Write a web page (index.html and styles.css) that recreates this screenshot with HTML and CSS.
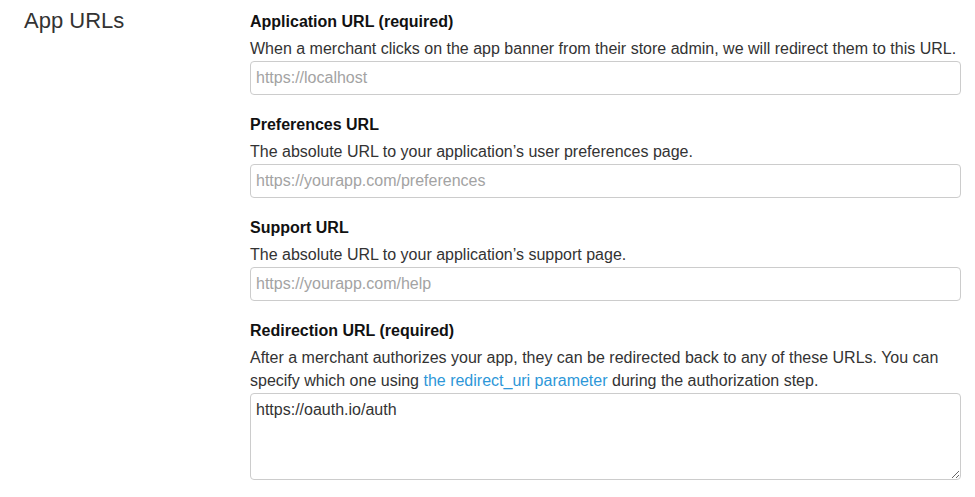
FILE: index.html
```html
<!DOCTYPE html>
<html lang="en">
<head>
<meta charset="utf-8">
<title>App URLs</title>
<link rel="stylesheet" href="styles.css">
</head>
<body>
<section class="settings">
  <h2 class="settings-title">App URLs</h2>
  <div class="settings-fields">
    <div class="field">
      <label class="field-label" for="app-url">Application URL (required)</label>
      <p class="field-help">When a merchant clicks on the app banner from their store admin, we will redirect them to this URL.</p>
      <input class="field-input" id="app-url" type="text" placeholder="https://localhost">
    </div>
    <div class="field">
      <label class="field-label" for="pref-url">Preferences URL</label>
      <p class="field-help">The absolute URL to your application’s user preferences page.</p>
      <input class="field-input" id="pref-url" type="text" placeholder="https://yourapp.com/preferences">
    </div>
    <div class="field">
      <label class="field-label" for="support-url">Support URL</label>
      <p class="field-help">The absolute URL to your application’s support page.</p>
      <input class="field-input" id="support-url" type="text" placeholder="https://yourapp.com/help">
    </div>
    <div class="field">
      <label class="field-label" for="redirect-url">Redirection URL (required)</label>
      <p class="field-help">After a merchant authorizes your app, they can be redirected back to any of these URLs. You can specify which one using <a class="link" href="#">the redirect_uri parameter</a> during the authorization step.</p>
      <textarea class="field-textarea" id="redirect-url">https://oauth.io/auth</textarea>
    </div>
  </div>
</section>
</body>
</html>
```

FILE: styles.css
```css
html, body {
  margin: 0;
  padding: 0;
  background: #ffffff;
}

body {
  font-family: "Liberation Sans", Arial, Helvetica, sans-serif;
  color: #333333;
  font-size: 16px;
}

.settings {
  display: grid;
  grid-template-columns: 226px 1fr;
  padding: 10px 14px 0 24px;
}

.settings-title {
  margin: 0;
  font-size: 22px;
  line-height: 22px;
  font-weight: normal;
  color: #333333;
}

.settings-fields {
  display: flex;
  flex-direction: column;
  gap: 18px;
}

.field {
  display: flex;
  flex-direction: column;
}

.field-label {
  display: block;
  font-weight: bold;
  font-size: 16px;
  line-height: 23px;
  color: #111111;
  margin-bottom: 4px;
}

.field-help {
  margin: 0 0 1px 0;
  font-size: 16px;
  line-height: 23px;
  color: #333333;
}

.link {
  color: #2d97d8;
  text-decoration: none;
}

.field-input,
.field-textarea {
  box-sizing: border-box;
  width: 100%;
  margin: 0;
  border: 1px solid #cccccc;
  border-radius: 4px;
  font-family: "Liberation Sans", Arial, Helvetica, sans-serif;
  font-size: 16px;
  color: #333333;
  background: #ffffff;
  outline: none;
}

.field-input {
  height: 34px;
  padding: 0 5px;
}

.field-input::placeholder {
  color: #a3a3a3;
  opacity: 1;
}

.field-textarea {
  height: 87px;
  padding: 6px 5px;
  line-height: 20px;
  resize: vertical;
  display: block;
}
```
